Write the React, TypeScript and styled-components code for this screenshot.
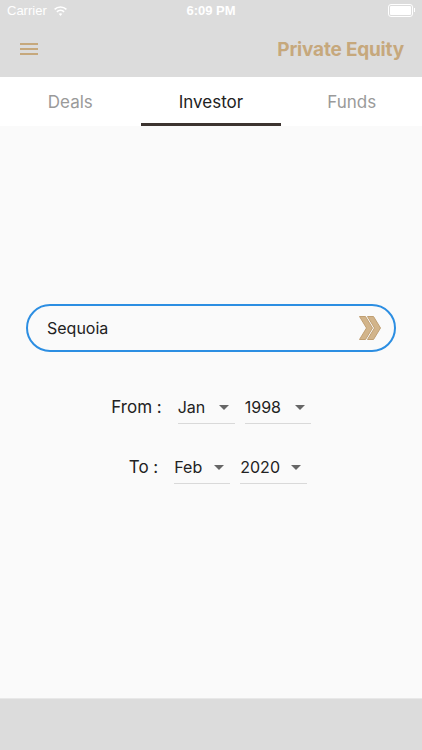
import React, { FC } from "react";
import styled, { createGlobalStyle } from "styled-components";

const GlobalStyle = createGlobalStyle`
  html, body {
    margin: 0;
    padding: 0;
  }
  body {
    font-family: "Inter", "Roboto", "Liberation Sans", sans-serif;
    background: #fafafa;
  }
`;

const Screen = styled.div`
  width: 422px;
  height: 750px;
  display: flex;
  flex-direction: column;
  background: #fafafa;
  overflow: hidden;
`;

const StatusBar = styled.div`
  height: 20px;
  background: #dcdcdc;
  display: grid;
  grid-template-columns: 1fr auto 1fr;
  align-items: center;
  padding: 0 7px;
  color: #fff;
  font-family: "Liberation Sans", sans-serif;
  font-size: 13px;
`;

const StatusLeft = styled.div`
  display: flex;
  align-items: center;
  gap: 6px;
`;

const Clock = styled.div`
  font-weight: bold;
  font-size: 13px;
`;

const StatusRight = styled.div`
  display: flex;
  justify-content: flex-end;
  padding-right: 2px;
`;

const Battery = styled.div`
  width: 21px;
  height: 9px;
  border: 1px solid #fff;
  border-radius: 3px;
  padding: 1px;
  position: relative;
  &::before {
    content: "";
    display: block;
    width: 100%;
    height: 100%;
    background: #fff;
    border-radius: 1px;
  }
  &::after {
    content: "";
    position: absolute;
    right: -3px;
    top: 3px;
    width: 1px;
    height: 4px;
    background: #fff;
  }
`;

const AppBar = styled.div`
  height: 57px;
  background: #dcdcdc;
  display: flex;
  align-items: center;
  justify-content: space-between;
  padding: 0 18px 0 20px;
`;

const Title = styled.div`
  color: #c6a87c;
  font-weight: 700;
  font-size: 19px;
  letter-spacing: -0.2px;
  margin-top: 2px;
`;

const Tabs = styled.div`
  height: 49px;
  background: #fff;
  display: grid;
  grid-template-columns: repeat(3, 1fr);
`;

const Tab = styled.div<{ active?: boolean }>`
  display: flex;
  align-items: center;
  justify-content: center;
  font-size: 17px;
  color: ${(p) => (p.active ? "#222" : "#9a9a9a")};
  border-bottom: 3px solid ${(p) => (p.active ? "#3c3430" : "transparent")};
  box-sizing: border-box;
  padding-top: 3px;
`;

const Body = styled.div`
  flex: 1;
  display: flex;
  flex-direction: column;
  align-items: center;
  padding-top: 178px;
`;

const SearchBox = styled.div`
  width: 370px;
  height: 48px;
  box-sizing: border-box;
  border: 2px solid #2c8ee2;
  border-radius: 24px;
  display: flex;
  align-items: center;
  justify-content: space-between;
  padding: 0 12px 0 19px;
  background: #fafafa;
`;

const SearchText = styled.span`
  font-size: 16px;
  color: #222;
`;

const DateRow = styled.div<{ offset: number; shift?: number }>`
  display: flex;
  align-items: flex-end;
  gap: 10px;
  margin-top: ${(p) => p.offset}px;
  margin-left: ${(p) => p.shift || 0}px;
`;

const Label = styled.span`
  font-size: 17px;
  color: #222;
  margin-right: 6px;
  padding-bottom: 7px;
`;

const Select = styled.div<{ w: number }>`
  width: ${(p) => p.w}px;
  box-sizing: border-box;
  display: flex;
  align-items: center;
  justify-content: space-between;
  padding: 0 6px 6px 0;
  border-bottom: 1px solid #d9d9d9;
  font-size: 16px;
  color: #222;
`;

const Caret = styled.span`
  width: 0;
  height: 0;
  border-left: 5px solid transparent;
  border-right: 5px solid transparent;
  border-top: 5px solid #666;
`;

const BottomBar = styled.div`
  height: 51px;
  background: #dcdcdc;
  border-top: 1px solid #e8e8e8;
`;

const Menu: FC = () => (
  <svg width="18" height="14" viewBox="0 0 18 14">
    <rect x="0" y="1" width="18" height="2" fill="#c6a87c" />
    <rect x="0" y="6" width="18" height="2" fill="#c6a87c" />
    <rect x="0" y="11" width="18" height="2" fill="#c6a87c" />
  </svg>
);

const Wifi: FC = () => (
  <svg width="15" height="11" viewBox="0 0 15 11">
    <path d="M7.5 11 L9.3 8.8 A3 3 0 0 0 5.7 8.8 Z" fill="#fff" />
    <path d="M3.9 6.8 A5.3 5.3 0 0 1 11.1 6.8" stroke="#fff" strokeWidth="1.6" fill="none" />
    <path d="M1.6 4.3 A8.6 8.6 0 0 1 13.4 4.3" stroke="#fff" strokeWidth="1.6" fill="none" />
  </svg>
);

const Go: FC = () => (
  <svg width="23" height="24" viewBox="0 0 23 24">
    <path d="M0.5 0.5h6l7 11.5-7 11.5h-6l7-11.5z" fill="#d2b48a" stroke="#c09f72" strokeWidth="1" strokeLinejoin="round" />
    <path d="M8.5 0.5h6l7 11.5-7 11.5h-6l7-11.5z" fill="#d2b48a" stroke="#c09f72" strokeWidth="1" strokeLinejoin="round" />
  </svg>
);

export default function App() {
  return (
    <Screen>
      <GlobalStyle />
      <StatusBar>
        <StatusLeft>
          Carrier <Wifi />
        </StatusLeft>
        <Clock>6:09 PM</Clock>
        <StatusRight>
          <Battery />
        </StatusRight>
      </StatusBar>
      <AppBar>
        <Menu />
        <Title>Private Equity</Title>
      </AppBar>
      <Tabs>
        <Tab>Deals</Tab>
        <Tab active>Investor</Tab>
        <Tab>Funds</Tab>
      </Tabs>
      <Body>
        <SearchBox>
          <SearchText>Sequoia</SearchText>
          <Go />
        </SearchBox>
        <DateRow offset={45}>
          <Label>From :</Label>
          <Select w={57}>
            Jan <Caret />
          </Select>
          <Select w={66}>
            1998 <Caret />
          </Select>
        </DateRow>
        <DateRow offset={33} shift={14}>
          <Label>To :</Label>
          <Select w={56}>
            Feb <Caret />
          </Select>
          <Select w={67}>
            2020 <Caret />
          </Select>
        </DateRow>
      </Body>
      <BottomBar />
    </Screen>
  );
}
